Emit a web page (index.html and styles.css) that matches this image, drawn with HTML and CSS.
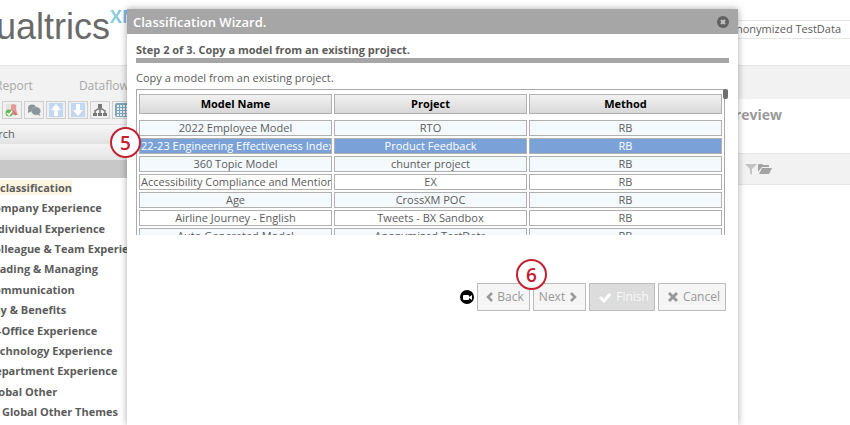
FILE: index.html
```html
<!DOCTYPE html>
<html lang="en">
<head>
<meta charset="utf-8">
<title>Classification Wizard</title>
<link rel="stylesheet" href="styles.css">
</head>
<body>
<div class="page">
  <header class="top">
    <div class="logo">ualtrics<sup>XM</sup></div>
    <div class="project">Anonymized TestData</div>
  </header>
  <nav class="nav">
    <a href="#">Report</a>
    <a href="#">Dataflow</a>
  </nav>
  <div class="main">
    <aside class="side">
      <div class="toolbar">
        <button type="button" aria-label="Validate"><svg viewBox="0 0 16 16"><path d="M2 2h11v11H2z" fill="#e6e2e2"/><path d="M7 3l2-1 3 1v5l2 5H7z" fill="#e39a9a"/><path d="M9 9l3 4" stroke="#cf7474" stroke-width="2"/><circle cx="5" cy="11" r="3.5" fill="#62b850"/><path d="M3 11l2 2 3-4" fill="none" stroke="#fff" stroke-width="1.5"/></svg></button>
        <button type="button" aria-label="Comments"><svg viewBox="0 0 16 16"><ellipse cx="6" cy="6" rx="4" ry="3.5" fill="#8a949c"/><path d="M2 8l0 3 4-2z" fill="#8a949c"/><ellipse cx="10" cy="9" rx="4.5" ry="4" fill="#8a949c" stroke="#b5bbc0" stroke-width=".5"/><path d="M11 12l3 2-1-4z" fill="#8a949c"/></svg></button>
        <button type="button" aria-label="Move up"><svg viewBox="0 0 16 16"><path d="M1 1h14v14H1z" fill="#c3d7f0"/><path d="M8 2l5 6h-3v6H6V8H3z" fill="#fff"/></svg></button>
        <button type="button" aria-label="Move down"><svg viewBox="0 0 16 16"><path d="M1 1h14v14H1z" fill="#c3d7f0"/><path d="M8 14l5-6h-3V2H6v6H3z" fill="#fff"/></svg></button>
        <button type="button" aria-label="Hierarchy"><svg viewBox="0 0 16 16"><path d="M8 4v8M3 12V9l3-2h4l3 2v3" fill="none" stroke="#777" stroke-width="1.5"/><path d="M6 2h4v4H6zM1 11h4v3H1zM6 11h4v3H6zM11 11h4v3h-4z" fill="#777"/></svg></button>
        <button type="button" aria-label="Grid"><svg viewBox="0 0 16 16"><rect x="1" y="1" width="15" height="14" rx="2" fill="#7fa5bc"/><path d="M3 3h2v2H3zM6 3h2v2H6zM9 3h2v2H9zM12 3h2v2h-2zM3 6h2v2H3zM6 6h2v2H6zM9 6h2v2H9zM12 6h2v2h-2zM3 9h2v2H3zM6 9h2v2H6zM9 9h2v2H9zM12 9h2v2h-2zM3 12h2v2H3zM6 12h2v2H6zM9 12h2v2H9zM12 12h2v2h-2z" fill="#e5f0f6"/></svg></button>
      </div>
      <div class="search">Search</div>
      <div class="strip"></div>
      <div class="band"></div>
      <ul class="tree">
        <li class="root"><span>classification</span></li>
        <li>Company Experience</li>
        <li>Individual Experience</li>
        <li>Colleague &amp; Team Experience</li>
        <li>Leading &amp; Managing</li>
        <li>Communication</li>
        <li>Pay &amp; Benefits</li>
        <li>In-Office Experience</li>
        <li>Technology Experience</li>
        <li>Department Experience</li>
        <li>Global Other</li>
        <li class="leaf">Global Other Themes</li>
      </ul>
    </aside>
    <section class="preview">
      <h2>Preview</h2>
      <div class="filters">
        <svg class="funnel" viewBox="0 0 12 12"><path d="M0 1h12L7 6v6L5 10V6z" fill="#c3c3c3"/></svg>
        <svg class="folder" viewBox="0 0 14 12"><path d="M0 9V2q0-1 1-1h3l1 1h5q1 0 1 1v1H4z" fill="#a3a3a3"/><path d="M1 11l3-6h10l-3 6z" fill="#a3a3a3"/></svg>
      </div>
    </section>
  </div>
</div>

<div class="dialog" role="dialog" aria-labelledby="title">
  <div class="titlebar">
    <h1 id="title">Classification Wizard.</h1>
    <button type="button" class="close" aria-label="Close"><svg viewBox="0 0 12 12"><circle cx="6" cy="6" r="6" fill="#616161"/><path d="M4 4l4 4M8 4l-4 4" stroke="#c4c4c4" stroke-width="2"/></svg></button>
  </div>
  <div class="content">
    <h2 class="step">Step 2 of 3. Copy a model from an existing project.</h2>
    <p class="hint">Copy a model from an existing project.</p>
    <div class="list">
      <div class="frame">
        <table>
          <thead><tr><th>Model Name</th><th>Project</th><th>Method</th></tr></thead>
          <tbody>
            <tr><td>2022 Employee Model</td><td>RTO</td><td>RB</td></tr>
            <tr class="selected"><td>22-23 Engineering Effectiveness Index</td><td>Product Feedback</td><td>RB</td></tr>
            <tr><td>360 Topic Model</td><td>chunter project</td><td>RB</td></tr>
            <tr><td>Accessibility Compliance and Mentions</td><td>EX</td><td>RB</td></tr>
            <tr><td>Age</td><td>CrossXM POC</td><td>RB</td></tr>
            <tr><td>Airline Journey - English</td><td>Tweets - BX Sandbox</td><td>RB</td></tr>
            <tr><td>Auto Generated Model</td><td>Anonymized TestData</td><td>RB</td></tr>
          </tbody>
        </table>
      </div>
      <span class="thumb"></span>
    </div>
    <div class="actions">
      <svg class="camera" viewBox="0 0 14 14"><circle cx="7" cy="7" r="7" fill="#000"/><rect x="3" y="5" width="6" height="5" rx="1" fill="#fff"/><path d="M9 7l3-2v5L9 8z" fill="#fff"/></svg>
      <button type="button" class="back"><svg class="chev" viewBox="0 0 8 12"><path d="M6 2L2 6l4 4" fill="none" stroke="#999" stroke-width="2.5"/></svg>Back</button>
      <button type="button" class="next">Next<svg class="chev" viewBox="0 0 8 12"><path d="M2 2l4 4-4 4" fill="none" stroke="#999" stroke-width="2.5"/></svg></button>
      <button type="button" class="finish" disabled><svg viewBox="0 0 12 12"><path d="M1 6l4 4 6-7" fill="none" stroke="#fff" stroke-width="3"/></svg>Finish</button>
      <button type="button"><svg class="cross" viewBox="0 0 10 12"><path d="M1 2l8 8M9 2l-8 8" stroke="#999" stroke-width="3"/></svg>Cancel</button>
    </div>
  </div>
</div>
<span class="marker five">5</span>
<span class="marker six">6</span>
</body>
</html>
```

FILE: styles.css
```css
* { box-sizing: border-box; }
body {
  margin: 0;
  height: 100vh;
  overflow: hidden;
  position: relative;
  background: #fff;
  color: #5c5c5c;
  font: 11px/16px "Open Sans", "Noto Sans", sans-serif;
}
h1, h2, p, ul { margin: 0; padding: 0; }
button { font: inherit; cursor: pointer; }
svg { display: block; }

.page { display: flex; flex-direction: column; height: 100%; }
.top { display: flex; justify-content: space-between; height: 65px; }
.logo {
  display: flex;
  margin-left: -4px;
  color: #6a6a6a;
  font: 36px/54px "Liberation Sans", sans-serif;
}
.logo sup {
  height: 24px;
  margin-top: 4px;
  font: bold 18px/24px "Open Sans", sans-serif;
  color: transparent;
  background: linear-gradient(100deg, #8fdcd6, #7fb4ee 60%, #79a0f2);
  -webkit-background-clip: text;
  background-clip: text;
}
.project {
  width: 160px;
  height: 19px;
  margin-top: 20px;
  padding-right: 9px;
  border: solid #e6e6e6;
  border-width: 1px 0;
  text-align: right;
  line-height: 16px;
}
.nav {
  display: flex;
  gap: 46px;
  height: 34px;
  padding: 12px 0 0;
  border-top: 1px solid #e4e4e4;
  background: #f2f2f2;
}
.nav a { color: #a8a8a8; font-size: 12px; text-decoration: none; }
.nav a:first-child { margin-left: -5px; }

.main { flex: 1; display: flex; justify-content: space-between; min-height: 0; }
.side { display: flex; flex-direction: column; width: 134px; overflow: hidden; }
.toolbar { display: flex; gap: 2px; height: 25px; padding: 2px 0 0 2px; background: #f2f2f2; }
.toolbar button {
  flex: none;
  width: 20px;
  height: 18px;
  padding: 0 1px;
  border: 1px solid #cfcfcf;
  background: #f0f0f0;
}
.toolbar svg { width: 16px; height: 16px; }
.search {
  height: 20px;
  padding-top: 1px;
  text-indent: -20px;
  border-top: 1px solid #e0e0e0;
  background: linear-gradient(#f6f6f6, #e2e2e2);
}
.strip { height: 16px; background: linear-gradient(#f4f4f4, #e4e4e4); }
.band { height: 18px; background: #c8c8c8; }
.tree {
  flex: 1;
  display: flex;
  flex-direction: column;
  justify-content: space-between;
  margin-left: -13px;
  padding: 0 0 3px;
  list-style: none;
  font-weight: bold;
  line-height: 20px;
  white-space: nowrap;
}
.root { padding-left: 13px; }
.root span { background: #fdf6e3; }
.leaf { padding-left: 15px; }

.preview { width: 134px; }
.preview h2 { padding: 6px 0 0 10px; color: #999; font-size: 14px; line-height: 20px; }
.filters {
  display: flex;
  gap: 1px;
  height: 32px;
  margin-top: 28px;
  padding: 9px 0 0 29px;
  border: solid #e6e6e6;
  border-width: 1px 0;
  background: #f2f2f2;
}
.funnel { width: 12px; height: 12px; }
.folder { width: 14px; height: 12px; }

.dialog {
  position: absolute;
  top: 9px;
  bottom: 0;
  left: 127px;
  right: 112px;
  background: #fff;
  box-shadow: 0 0 7px rgba(0, 0, 0, .35);
}
.titlebar {
  display: flex;
  justify-content: space-between;
  align-items: center;
  height: 25px;
  padding: 0 9px 0 6px;
  background: #a6a6a6;
  color: #fff;
}
.titlebar h1 { font-size: 13px; font-weight: 600; line-height: 20px; }
.close { width: 12px; height: 12px; padding: 0; border: 0; background: none; }
.content { padding: 8px 9px 0; }
.step { border-bottom: 5px solid #a6a6a6; font-size: 11px; line-height: 16px; }
.hint { padding: 7px 0 3px; }
.list { position: relative; }
.frame {
  height: 146px;
  margin-right: 4px;
  overflow: hidden;
  border: 1px solid #aaa;
  border-bottom: 0;
}
.thumb {
  position: absolute;
  top: 0;
  right: 1px;
  width: 5px;
  height: 10px;
  border-radius: 2px;
  background: #707070;
}
table {
  width: 100%;
  margin-top: 2px;
  table-layout: fixed;
  border-collapse: separate;
  border-spacing: 2px;
}
th, td {
  padding: 0 1px;
  overflow: hidden;
  border: 1px solid #b0b0b0;
  text-align: center;
  white-space: nowrap;
}
th { height: 20px; color: #000; line-height: 18px; background: linear-gradient(#f2f2f2, #d8d8d8); }
td { height: 16px; line-height: 14px; }
tbody::before { content: ""; display: table-row; height: 2px; }
tbody tr:nth-child(odd) td { background: #f4f9fd; }
tbody .selected td { background: #7aa2d8; color: #fff; }

.actions { display: flex; justify-content: flex-end; align-items: center; gap: 3px; margin-top: 48px; padding-right: 3px; }
.camera { width: 14px; height: 14px; }
.actions button {
  display: flex;
  align-items: center;
  gap: 5px;
  height: 28px;
  padding: 0 5px 0 9px;
  border: 1px solid #bcbcbc;
  background: #f5f5f5;
  color: #999;
  font-size: 12px;
}
.actions button svg { width: 12px; height: 12px; }
.actions button .chev { width: 8px; }
.actions button .cross { width: 10px; }
.actions .back { gap: 3px; padding: 0 5px 0 8px; }
.actions .next { gap: 4px; padding: 0 8px 0 5px; }
.actions .finish { background: #dcdcdc; color: #f8f8f8; }

.marker {
  position: absolute;
  width: 31px;
  height: 31px;
  border: 2px solid #c4202f;
  border-radius: 50%;
  background: #fff;
  color: #c4202f;
  font-size: 19px;
  font-weight: 600;
  line-height: 29px;
  text-align: center;
}
.five { left: 110px; top: 127px; }
.six { left: 516px; top: 259px; }
```
